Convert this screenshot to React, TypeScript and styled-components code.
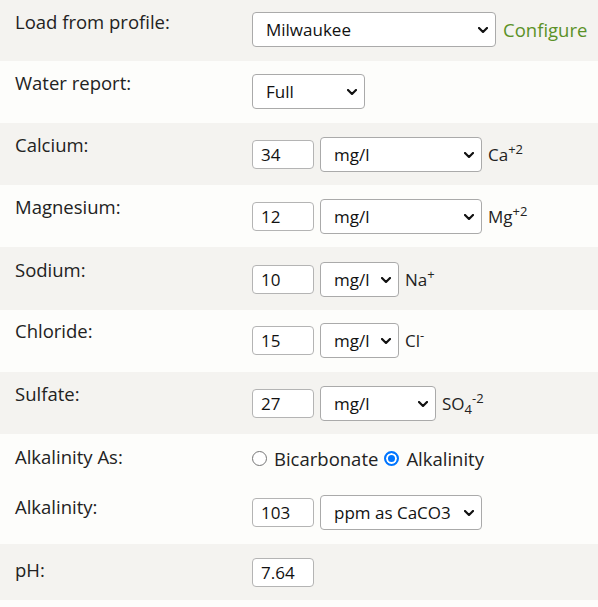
import React from "react";
import styled, { createGlobalStyle } from "styled-components";

const GlobalStyle = createGlobalStyle`
  html, body { margin: 0; padding: 0; background: #fdfdfb; }
  body { font-family: "Open Sans", "Liberation Sans", sans-serif; color: #222; }
  * { box-sizing: border-box; }
`;

const Form = styled.div`
  width: 598px;
  display: flex;
  flex-direction: column;
`;

const Row = styled.div<{ $alt?: boolean; $pt: number; $pb: number }>`
  display: grid;
  grid-template-columns: 252px 1fr;
  align-items: start;
  background: ${(p) => (p.$alt ? "#f4f3f0" : "#fdfdfb")};
  padding: ${(p) => p.$pt}px 0 ${(p) => p.$pb}px;
`;

const Label = styled.div<{ $shift?: number }>`
  font-size: 18.5px;
  line-height: 25px;
  padding-left: 15px;
  margin-top: ${(p) => p.$shift ?? -4}px;
`;

const Controls = styled.div`
  display: flex;
  align-items: center;
  gap: 6px;
  min-height: 25px;
`;

const chevron = encodeURIComponent(
  `<svg xmlns="http://www.w3.org/2000/svg" width="10" height="6" viewBox="0 0 10 6"><path d="M1 1l4 4 4-4" fill="none" stroke="#111" stroke-width="2.2" stroke-linecap="round" stroke-linejoin="round"/></svg>`
);

const Select = styled.select<{ $w: number }>`
  appearance: none;
  -webkit-appearance: none;
  width: ${(p) => p.$w}px;
  height: 35px;
  border: 1px solid #aaa;
  border-radius: 4px;
  background: #fff url("data:image/svg+xml,${chevron}") no-repeat right 7px center / 10px 6px;
  padding: 0 24px 0 13px;
  font-family: "Open Sans", "Liberation Sans", sans-serif;
  font-size: 17px;
  color: #111;
  outline: none;
`;

const NumInput = styled.input`
  width: 62px;
  height: 29px;
  border: 1px solid #b4b4b4;
  border-radius: 4px;
  background: #fff;
  padding: 0 8px;
  font-family: "Open Sans", "Liberation Sans", sans-serif;
  font-size: 17px;
  color: #111;
  outline: none;
`;

const Link = styled.a`
  font-size: 18.5px;
  color: #5b9127;
  text-decoration: none;
  margin-left: 1px;
`;

const Ion = styled.span`
  font-size: 17px;
  line-height: 25px;
  color: #222;
  sup, sub {
    font-size: 13px;
    line-height: 0;
  }
`;

const RadioGroup = styled.div`
  display: flex;
  align-items: center;
  font-size: 18.5px;
  line-height: 25px;
`;

const RadioLabel = styled.label`
  display: flex;
  align-items: center;
  margin-right: 6px;
`;

const Radio = styled.input`
  appearance: none;
  -webkit-appearance: none;
  width: 15px;
  height: 15px;
  margin: 0 7px 0 0;
  border-radius: 50%;
  border: 1px solid #767676;
  background: #fff;
  &:checked {
    border: 2px solid #0075ff;
    background: #0075ff;
    box-shadow: inset 0 0 0 2px #fff;
  }
`;

type Ionic = { label: string; value: string; width: number; ion: React.ReactNode; alt: boolean; pt: number; pb: number };

const ions: Ionic[] = [
  { label: "Calcium:", value: "34", width: 162, ion: <>Ca<sup>+2</sup></>, alt: true, pt: 14, pb: 13 },
  { label: "Magnesium:", value: "12", width: 162, ion: <>Mg<sup>+2</sup></>, alt: false, pt: 14, pb: 13 },
  { label: "Sodium:", value: "10", width: 79, ion: <>Na<sup>+</sup></>, alt: true, pt: 15, pb: 13 },
  { label: "Chloride:", value: "15", width: 79, ion: <>Cl<sup>-</sup></>, alt: false, pt: 13, pb: 14 },
  { label: "Sulfate:", value: "27", width: 116, ion: <>SO<sub>4</sub><sup>-2</sup></>, alt: true, pt: 14, pb: 13 },
];

export default function App() {
  return (
    <>
      <GlobalStyle />
      <Form>
        <Row $alt $pt={12} $pb={14}>
          <Label $shift={-3}>Load from profile:</Label>
          <Controls>
            <Select $w={244} defaultValue="Milwaukee">
              <option>Milwaukee</option>
            </Select>
            <Link href="#">Configure</Link>
          </Controls>
        </Row>
        <Row $pt={13} $pb={14}>
          <Label $shift={-4}>Water report:</Label>
          <Controls>
            <Select $w={113} defaultValue="Full">
              <option>Full</option>
            </Select>
          </Controls>
        </Row>
        {ions.map((r) => (
          <Row key={r.label} $alt={r.alt} $pt={r.pt} $pb={r.pb}>
            <Label $shift={-5}>{r.label}</Label>
            <Controls>
              <NumInput defaultValue={r.value} />
              <Select $w={r.width} defaultValue="mg/l">
                <option>mg/l</option>
              </Select>
              <Ion>{r.ion}</Ion>
            </Controls>
          </Row>
        ))}
        <Row $pt={12} $pb={12}>
          <Label $shift={-2}>Alkalinity As:</Label>
          <RadioGroup>
            <RadioLabel>
              <Radio type="radio" name="alk" />
              Bicarbonate
            </RadioLabel>
            <RadioLabel>
              <Radio type="radio" name="alk" defaultChecked />
              Alkalinity
            </RadioLabel>
          </RadioGroup>
        </Row>
        <Row $pt={12} $pb={14}>
          <Label $shift={-1}>Alkalinity:</Label>
          <Controls>
            <NumInput defaultValue="103" />
            <Select $w={162} defaultValue="ppm as CaCO3">
              <option>ppm as CaCO3</option>
            </Select>
          </Controls>
        </Row>
        <Row $alt $pt={14} $pb={13}>
          <Label $shift={-1}>pH:</Label>
          <Controls>
            <NumInput defaultValue="7.64" />
          </Controls>
        </Row>
      </Form>
    </>
  );
}
